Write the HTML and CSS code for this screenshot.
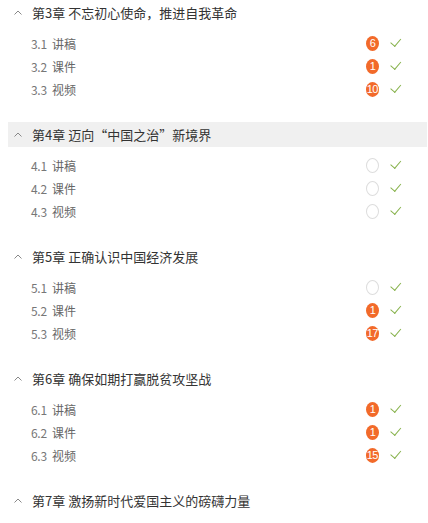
FILE: index.html
```html
<!DOCTYPE html>
<html lang="zh-CN">
<head>
  <meta charset="UTF-8" />
  <title>章节目录</title>
  <link rel="stylesheet" href="styles.css">
</head>
<body>
  <div class="chapters">

    <div class="chapter">
      <div class="chapter-title">
        <svg class="caret" width="8" height="5" viewBox="0 0 8 5"><path d="M0.5 4.5 L4 1 L7.5 4.5" fill="none" stroke="#888" stroke-width="1"/></svg>
        <span>第3章 不忘初心使命，推进自我革命</span>
      </div>
      <ul class="items">
        <li><span class="num">3.1</span><span class="name">讲稿</span><span class="badge">6</span><span class="check"></span></li>
        <li><span class="num">3.2</span><span class="name">课件</span><span class="badge">1</span><span class="check"></span></li>
        <li><span class="num">3.3</span><span class="name">视频</span><span class="badge">10</span><span class="check"></span></li>
      </ul>
    </div>

    <div class="chapter">
      <div class="chapter-title active">
        <svg class="caret" width="8" height="5" viewBox="0 0 8 5"><path d="M0.5 4.5 L4 1 L7.5 4.5" fill="none" stroke="#888" stroke-width="1"/></svg>
        <span>第4章 迈向“中国之治”新境界</span>
      </div>
      <ul class="items">
        <li><span class="num">4.1</span><span class="name">讲稿</span><span class="badge empty"></span><span class="check"></span></li>
        <li><span class="num">4.2</span><span class="name">课件</span><span class="badge empty"></span><span class="check"></span></li>
        <li><span class="num">4.3</span><span class="name">视频</span><span class="badge empty"></span><span class="check"></span></li>
      </ul>
    </div>

    <div class="chapter">
      <div class="chapter-title">
        <svg class="caret" width="8" height="5" viewBox="0 0 8 5"><path d="M0.5 4.5 L4 1 L7.5 4.5" fill="none" stroke="#888" stroke-width="1"/></svg>
        <span>第5章 正确认识中国经济发展</span>
      </div>
      <ul class="items">
        <li><span class="num">5.1</span><span class="name">讲稿</span><span class="badge empty"></span><span class="check"></span></li>
        <li><span class="num">5.2</span><span class="name">课件</span><span class="badge">1</span><span class="check"></span></li>
        <li><span class="num">5.3</span><span class="name">视频</span><span class="badge">17</span><span class="check"></span></li>
      </ul>
    </div>

    <div class="chapter">
      <div class="chapter-title">
        <svg class="caret" width="8" height="5" viewBox="0 0 8 5"><path d="M0.5 4.5 L4 1 L7.5 4.5" fill="none" stroke="#888" stroke-width="1"/></svg>
        <span>第6章 确保如期打赢脱贫攻坚战</span>
      </div>
      <ul class="items">
        <li><span class="num">6.1</span><span class="name">讲稿</span><span class="badge">1</span><span class="check"></span></li>
        <li><span class="num">6.2</span><span class="name">课件</span><span class="badge">1</span><span class="check"></span></li>
        <li><span class="num">6.3</span><span class="name">视频</span><span class="badge">15</span><span class="check"></span></li>
      </ul>
    </div>

    <div class="chapter">
      <div class="chapter-title">
        <svg class="caret" width="8" height="5" viewBox="0 0 8 5"><path d="M0.5 4.5 L4 1 L7.5 4.5" fill="none" stroke="#888" stroke-width="1"/></svg>
        <span>第7章 激扬新时代爱国主义的磅礴力量</span>
      </div>
    </div>

  </div>
</body>
</html>
```

FILE: styles.css
```css
body {
  margin: 0;
  background: #fff;
  font-family: "Noto Sans CJK SC", sans-serif;
  overflow: hidden;
}

.chapters {
  padding-left: 8px;
  padding-right: 1px;
}

.chapter-title {
  display: flex;
  align-items: center;
  height: 25px;
  padding-left: 6px;
  font-size: 13px;
  color: #333;
}

.chapter-title.active {
  background: #f0f0f0;
}

.caret {
  margin-right: 10px;
  flex: none;
}

.items {
  list-style: none;
  margin: 0;
  padding: 7px 0 21px 0;
}

.items li {
  display: flex;
  align-items: center;
  height: 23px;
  padding-left: 23px;
  padding-right: 25px;
  font-size: 12px;
  color: #666;
}

.num {
  width: 21px;
  color: #777;
  letter-spacing: -0.3px;
}

.name {
  flex: 1;
}

.badge {
  min-width: 13px;
  height: 15px;
  padding: 0 1px;
  box-sizing: border-box;
  border-radius: 50%;
  background: #f26a2a;
  color: #fff;
  font-family: "Liberation Sans", sans-serif;
  font-size: 11px;
  line-height: 15px;
  text-align: center;
  margin-right: 11px;
  letter-spacing: -0.5px;
}

.badge.empty {
  width: 13px;
  background: none;
  border: 1.5px solid #ddd;
}

.check {
  width: 5px;
  height: 9px;
  border-right: 1.5px solid #86b14a;
  border-bottom: 1.5px solid #86b14a;
  transform: rotate(40deg) translate(-2px, -2px);
  margin-left: 3px;
  margin-right: 3px;
}
```
